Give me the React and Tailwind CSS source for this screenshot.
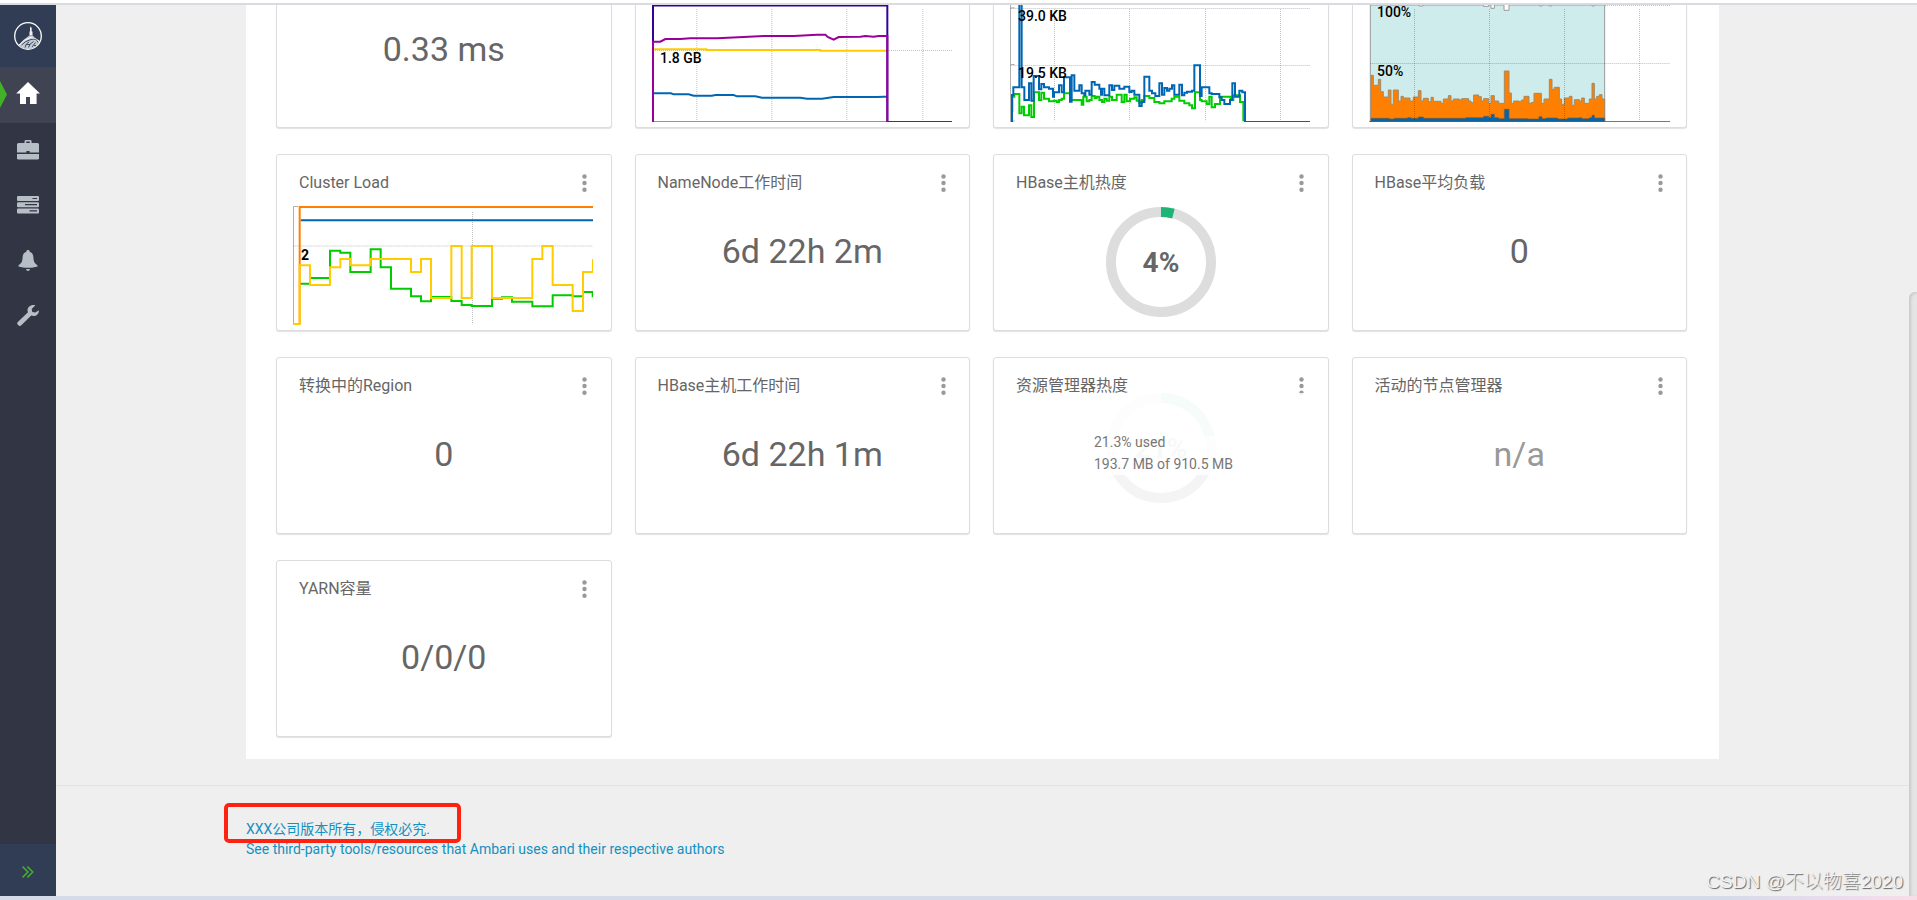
import { clsx } from 'clsx';

const navItems = [
  {
    label: 'Dashboard',
    active: true,
    icon: (
      <svg width="24" height="23" viewBox="0 0 24 23" fill="currentColor">
        <path d="M12 0 24 11.6H20.6V22H14V15H10V22H4V11.6H.2Z" />
      </svg>
    ),
  },
  {
    label: 'Services',
    icon: (
      <svg width="22" height="20" viewBox="0 0 22 20" fill="currentColor">
        <path
          fillRule="evenodd"
          d="M9 0h4.200Q14.600 0 14.600 1.400V3H20.500Q22 3 22 4.500V12.400H12.600V11H9.400V12.400H0V4.500Q0 3 1.500 3H7.500V1.400Q7.500 0 9 0ZM9.300 1.500V3H12.800V1.500Z"
        />
        <path d="M0 14H22V18.200Q22 19.600 20.500 19.600H1.500Q0 19.600 0 18.200Z" />
      </svg>
    ),
  },
  {
    label: 'Hosts',
    icon: (
      <svg width="22" height="18" viewBox="0 0 22 18" fill="currentColor">
        <rect y="0" width="22" height="5" rx="1" />
        <rect y="6.200" width="22" height="5" rx="1" />
        <rect y="12.400" width="22" height="5" rx="1" />
        <path d="M15.500 2.500h4.500M8 8.700h12M12.500 14.900h7.500" stroke="#323544" strokeWidth="1.200" />
      </svg>
    ),
  },
  {
    label: 'Alerts',
    icon: (
      <svg width="20" height="21" viewBox="0 0 20 21" fill="currentColor">
        <path d="M10 0C11 0 11.700.7 11.700 1.700 14.200 2.500 15.200 4.600 15.400 7.500 15.700 12 16.500 13.200 19.500 15.200V16.500C16.500 17.300 14 17.800 10 17.800S3.500 17.300.5 16.500V15.200C3.500 13.200 4.300 12 4.600 7.500 4.800 4.600 5.800 2.500 8.300 1.700 8.300.7 9 0 10 0Z" />
        <path d="M8 19H12Q11.600 21 10 21T8 19Z" />
      </svg>
    ),
  },
  {
    label: 'Cluster Admin',
    icon: (
      <svg width="22" height="21" viewBox="0 0 22 21" fill="currentColor">
        <path d="M18.300.3 14.700 3.900 15.300 7 18.300 7.400 21.900 5.300C22.100 8.700 19.600 11 16.600 11 15.600 11 14.900 10.800 14.300 10.500L4.300 20.300Q3 21.500 1.700 20.400L.7 19.400Q-.5 18.200.8 16.900L11 7.300C10.600 6.600 10.500 6 10.500 5.200 10.600 1.900 14-.7 18.300.3Z" />
      </svg>
    ),
  },
];

const Kebab = ({ title }) => (
  <button type="button" aria-label={title} className="flex h-6 w-5 items-center justify-center text-[#999]">
    <svg width="5" height="19" viewBox="0 0 5 19" fill="currentColor">
      <circle cx="2.500" cy="2.500" r="2.200" />
      <circle cx="2.500" cy="9" r="2.200" />
      <circle cx="2.500" cy="15.700" r="2.200" />
    </svg>
  </button>
);

const cardBase = 'overflow-hidden border border-[#dddddd] bg-white shadow-[0_1px_1px_rgba(0,0,0,0.12)]';

const Widget = ({ title, children }) => (
  <section className={clsx(cardBase, 'h-[177px] rounded-[3px]')}>
    <header className="flex items-center justify-between pt-4 pr-4 pl-[22px]">
      <h2 className="text-base leading-6">{title}</h2>
      <Kebab title={title} />
    </header>
    {children}
  </section>
);

// Widget that is scrolled under the top bar
const CutWidget = ({ children }) => (
  <section className={clsx(cardBase, 'h-[123px] rounded-b-[3px] border-t-0')}>{children}</section>
);

const Value = ({ muted, children }) => (
  <p className={clsx('mt-8 text-center text-[34px] leading-12', muted && 'text-[#999]')}>{children}</p>
);

const Ring = ({ percent, label }) => {
  const length = 2 * Math.PI * 50;
  return (
    <svg width="110" height="110" viewBox="0 0 110 110" fill="none" strokeWidth="10">
      <circle cx="55" cy="55" r="50" stroke="#dddddd" />
      <circle
        cx="55"
        cy="55"
        r="50"
        stroke="#1eb475"
        strokeDasharray={`${(length * percent) / 100} ${length}`}
        transform="rotate(-90 55 55)"
      />
      <text x="55" y="65" textAnchor="middle" fill="#666" className="text-[28px] font-bold">
        {label}
      </text>
    </svg>
  );
};

const Grid = ({ d }) => (
  <path d={d} stroke="#000" strokeOpacity="0.250" strokeWidth="3" strokeDasharray="3 3" />
);

const MemoryChart = () => (
  <svg className="ml-4" width="300" height="118">
    <svg width="300" height="118" viewBox="95 15 900 354" fill="none" strokeWidth="6">
      <Grid d="M229.500 27V364M454.500 27V364M679.500 27V364M907.500 27V364M98 151.500H995" />
      <path d="M98 148H258V150H600V152H800" stroke="#ffcc00" />
      <path d="M98 280H152L160 283H205L220 287H275L285 285H340L350 289H405L425 293H540L560 296H605L640 291H770L790 290H800" stroke="#0066b3" />
      <path d="M98 364.500H800" stroke="#ff8000" strokeWidth="3" />
      <path d="M98 366V16.500H801V366" stroke="#330099" />
      <path d="M98 366V125H120L135 117H180L210 115H290L370 111L430 108H520L590 104H615L622 111L640 119L655 111L720 110L735 108L760 110L775 108H801V366" stroke="#990099" />
      <path d="M800 364.500H995" stroke="#990099" strokeWidth="3" />
    </svg>
    <text x="8" y="58" className="text-sm font-medium" fill="#000">1.8 GB</text>
  </svg>
);

const NetworkChart = () => (
  <svg className="ml-4" width="300" height="118">
    <svg width="300" height="118" viewBox="60 15 900 354" fill="none" strokeWidth="6">
      <path d="M61.500 15V366M61 23.500H74M61 193.500H74M61 363H74" stroke="#b0b0b0" strokeWidth="3" />
      <Grid d="M193.500 27V364M418.500 27V364M646.500 27V364M871.500 27V364M62 25.500H960M62 196.500H960" />
      <path
        d="M67 336V290H73V282H88V340H95V320H102V346H117V316H124V351H132V277H147V300H154V278H162V296H177V304H192V302H200V306H207V300H215V296H222V280H240V300H275V314H280V290H290V304H298V300H305V288H314V294H320V290H328V300H336V306H343V296H350V302H358V290H366V300H380V284H395V306H403V284H410V304H420V296H433V292H440V302H448V308H455V300H463V288H478V294H493V306H508V310H523V304H545V296H553V290H568V302H583V310H598V316H606V325H615V277H630V300H635V304H650V312H658V290H665V322H675V312H690V290H722V300H730V286H750V306H760V364"
        stroke="#00cc00"
      />
      <path
        d="M66 366V285H70V262H88V-20H95V262H103V300H117V250H124V302H131V228H147V268H154V252H162V262H177V266H189V290H192V277H207V256H215V277H222V232H240V305H245V226H253V272H268V256H275V280H283V286H286V272H298V284H305V246H314V254H328V266H333V284H336V266H343V286H358V256H366V270H373V257H388V266H403V260H418V276H425V272H433V284H448V318H455V306H463V230H478V272H486V280H496V288H508V250H516V284H523V264H531V272H538V266H546V256H553V284H568V254H576V286H583V278H591V275H606V272H613V196H630V288H635V262H658V280H665V282H688V292H695V300H703V312H720V300H727V250H735V290H748V272H757V277H765V366"
        stroke="#0066b3"
      />
      <path d="M765 364.500H960" stroke="#0066b3" strokeWidth="3" />
    </svg>
    <text x="8" y="16" className="text-sm font-medium" fill="#000">39.0 KB</text>
    <text x="8" y="73" className="text-sm font-medium" fill="#000">19.5 KB</text>
  </svg>
);

const CpuChart = () => (
  <svg className="ml-4" width="301" height="118">
    <svg width="301" height="118" viewBox="84 15 903 354" fill="none" strokeWidth="3">
      <path d="M88 365V15H791V365" fill="#cfecec" stroke="#999999" />
      <path d="M234 15V18H246V15M427 15V19H443V15M450 15V25H460V15M489 15V31H504V15M596 15V18H603V15M625 15V18H632V15M753 15V18H760V15" fill="#fff" stroke="#999999" />
      <path
        d="M90 364V226H97V256H112V238H119V275H127V291H142V270H150V313H157V270H172V303H180V289H187V294H207V303H217V291H232V272H240V303H247V295H262V305H270V292H277V304H300V310H307V297H322V287H330V303H337V297H355V300H362V296H383V303H390V308H398V285H413V290H421V303H428V296H443V310H450V287H460V303H473V310H490V213H504V279H511V310H518V303H534V305H541V300H549V289H564V310H571V307H579V280H601V310H609V297H625V238H633V268H640V262H655V297H662V313H670V294H685V289H693V316H700V299H715V303H722V294H730V310H745V297H753V250H760V297H767V289H775V284H783V297H791V364Z"
        fill="#ff8000"
        stroke="#a08a66"
      />
      <path
        d="M90 364V355H145V357H160V355H200V353H210V355H232V351H247V355H375V353H428V349H443V353H450V343H460V353H473V356H490V328H504V356H560V357H594V350H603V356H615V354H650V357H680V354H715V353H722V356H745V353H753V346H760V354H791V364Z"
        fill="#0066b3"
        stroke="#7a5a30"
        strokeWidth="2"
      />
      <Grid d="M220.500 27V364M445.500 27V364M670.500 27V364M895.500 27V364M88 190.500H987M792 16.500H987" />
      <path d="M85 364.500H791" stroke="#008c5a" strokeWidth="3" />
      <path d="M791 364.500H987" stroke="#22b422" strokeWidth="3" />
    </svg>
    <text x="8" y="12" className="text-sm font-medium" fill="#000">100%</text>
    <text x="8" y="71" className="text-sm font-medium" fill="#000">50%</text>
  </svg>
);

const LoadChart = () => (
  <svg className="mt-[11px] ml-4" width="300" height="119">
    <svg width="300" height="119" viewBox="84 183 900 357" fill="none" strokeWidth="6">
      <path d="M99 184.500H85.500V537H99" stroke="#b0b0b0" strokeWidth="3" />
      <Grid d="M622.500 201V538M85 303H984" />
      <path d="M105 416H135V399H195V317H226V323H256V381H317V313H347V367H378V431H438V454H468V469H498V456H559V468H590V480H620V483H681V461H711V457H741V470H802V484H863V451H923V454H954V441H983V457" stroke="#00cc00" />
      <path d="M107 225.500H984" stroke="#0066b3" />
      <path d="M104 537V186H984" stroke="#ff8000" />
      <path d="M85 537H104V361H135V420H195V367H226V342H256V361H317V342H438V381H468V342H498V459H559V303H590V459H620V303H681V459H802V342H832V303H863V420H923V498H954V381H984V342" stroke="#ffcc00" />
    </svg>
    <text x="8" y="54" className="text-sm font-bold" fill="#000">2</text>
  </svg>
);

const Logo = () => (
  <svg width="28" height="28" viewBox="0 0 28 28" fill="none" stroke="#fff">
    <circle cx="14" cy="14" r="13.300" strokeWidth="1.300" />
    <path d="M16.700 4.500 17.700 6V9.500H18.500V13.500H15.500V9.500H16V6Z" fill="#eef0f3" stroke="none" />
    <path d="M15.300 13.500H18.700L20.500 15.500 26 19Q22.500 27 14 27.200 8 27 4.500 23.500 9 17.500 15.300 13.500Z" fill="#c3cad3" stroke="none" />
    <path d="M5 23Q10 17.500 16.500 15.500 21 16 25.500 19.500" strokeWidth="1" />
    <path d="M7.500 23Q11 19 17 17.500T24 20.500M11 25.500Q11.500 21.500 15 20M14.500 25.500Q15 22 19.500 19.500M12.500 22.500H16M18 25 21.500 20.500M20 23.500H22" stroke="#313d54" strokeWidth="0.900" />
  </svg>
);

export default function App() {
  return (
    <div className="flex min-h-screen flex-col bg-[#efefef] font-[Roboto,'Noto_Sans_CJK_SC',sans-serif] text-[#666]">
      <div className="h-[5px] border-b-2 border-[#dadae1] bg-white" />

      <div className="flex grow">
        {/* Side navigation */}
        <nav className="flex w-14 shrink-0 flex-col bg-[#323544] text-[#b8bec5]">
          <a href="#home" aria-label="Ambari" className="flex h-[62px] items-center justify-center bg-[#313d54]">
            <Logo />
          </a>
          {navItems.map((item) => (
            <a
              key={item.label}
              href="#nav"
              aria-label={item.label}
              className={clsx(
                'relative flex items-center justify-center',
                item.active ? 'h-14 bg-[#404351] pb-1 text-white' : 'h-[55px] pb-px'
              )}
            >
              {item.active && (
                <svg className="absolute top-[14px] left-0" width="7" height="27" viewBox="0 0 7 27" fill="#43b02a">
                  <path d="M0 0 7 13.500 0 27Z" />
                </svg>
              )}
              {item.icon}
            </a>
          ))}
          <button type="button" aria-label="Expand" className="mt-auto flex h-[52px] items-center justify-center bg-[#313d54] pt-1">
            <svg width="12" height="12" viewBox="0 0 12 12" fill="none" stroke="#43b02a" strokeWidth="1.500">
              <path d="M.6.6 6 6 .6 11.400M5.400.6 10.800 6 5.400 11.400" />
            </svg>
          </button>
        </nav>

        <div className="flex min-w-0 grow flex-col">
          <main className="mx-auto w-full max-w-[1473px] bg-white pr-8 pb-[22px] pl-[30px]">
            <div className="grid grid-cols-4 gap-x-[23px] gap-y-[26px]">
              <CutWidget>
                <p className="mt-5 text-center text-[34px] leading-12">0.33 ms</p>
              </CutWidget>
              <CutWidget><MemoryChart /></CutWidget>
              <CutWidget><NetworkChart /></CutWidget>
              <CutWidget><CpuChart /></CutWidget>

              <Widget title="Cluster Load"><LoadChart /></Widget>
              <Widget title="NameNode工作时间"><Value>6d 22h 2m</Value></Widget>
              <Widget title="HBase主机热度">
                <div className="mt-3 flex justify-center">
                  <Ring percent={4} label="4%" />
                </div>
              </Widget>
              <Widget title="HBase平均负载"><Value>0</Value></Widget>

              <Widget title="转换中的Region"><Value>0</Value></Widget>
              <Widget title="HBase主机工作时间"><Value>6d 22h 1m</Value></Widget>
              <Widget title="资源管理器热度">
                <div className="relative -mt-[5px] flex justify-center">
                  <div className="opacity-30">
                    <Ring percent={21.3} label="21%" />
                  </div>
                  {/* Hover details over the faded ring */}
                  <div className="absolute inset-x-0 top-0 bg-white/85 pt-[38px] pl-[100px] text-sm leading-[22px] text-[#777]">
                    <p>21.3% used</p>
                    <p>193.7 MB of 910.5 MB</p>
                  </div>
                </div>
              </Widget>
              <Widget title="活动的节点管理器"><Value muted>n/a</Value></Widget>

              <Widget title="YARN容量"><Value>0/0/0</Value></Widget>
            </div>
          </main>

          <footer className="mt-[26px] border-t border-[#e3e3e3] pt-[33px]">
            <div className="relative mx-auto w-full max-w-[1473px] text-sm leading-5 text-[#1491c1]">
              <p><a href="#license">XXX公司版本所有，侵权必究.</a></p>
              <p><a href="#notice">See third-party tools/resources that Ambari uses and their respective authors</a></p>
              <div className="absolute -top-4 -left-[22px] h-10 w-[237px] rounded-[5px] border-4 border-[#ff2211]" />
            </div>
          </footer>
        </div>

        <div className="mt-[287px] w-2 shrink-0 rounded-tl-md bg-[#e5e5e5] shadow-[inset_2px_1px_3px_rgba(0,0,0,0.12)]" />
      </div>

      <div className="h-1 bg-linear-to-r from-[#d6dbe9] from-90% via-[#eedcee] via-97% to-[#f8dde6]" />

      <p className="absolute right-[14px] bottom-1 font-['Liberation_Sans','Noto_Sans_CJK_SC',sans-serif] text-[19px] leading-7 font-light text-[#f2f2f2] [text-shadow:1px_1px_1px_#666]">
        CSDN @不以物喜2020
      </p>
    </div>
  );
}
